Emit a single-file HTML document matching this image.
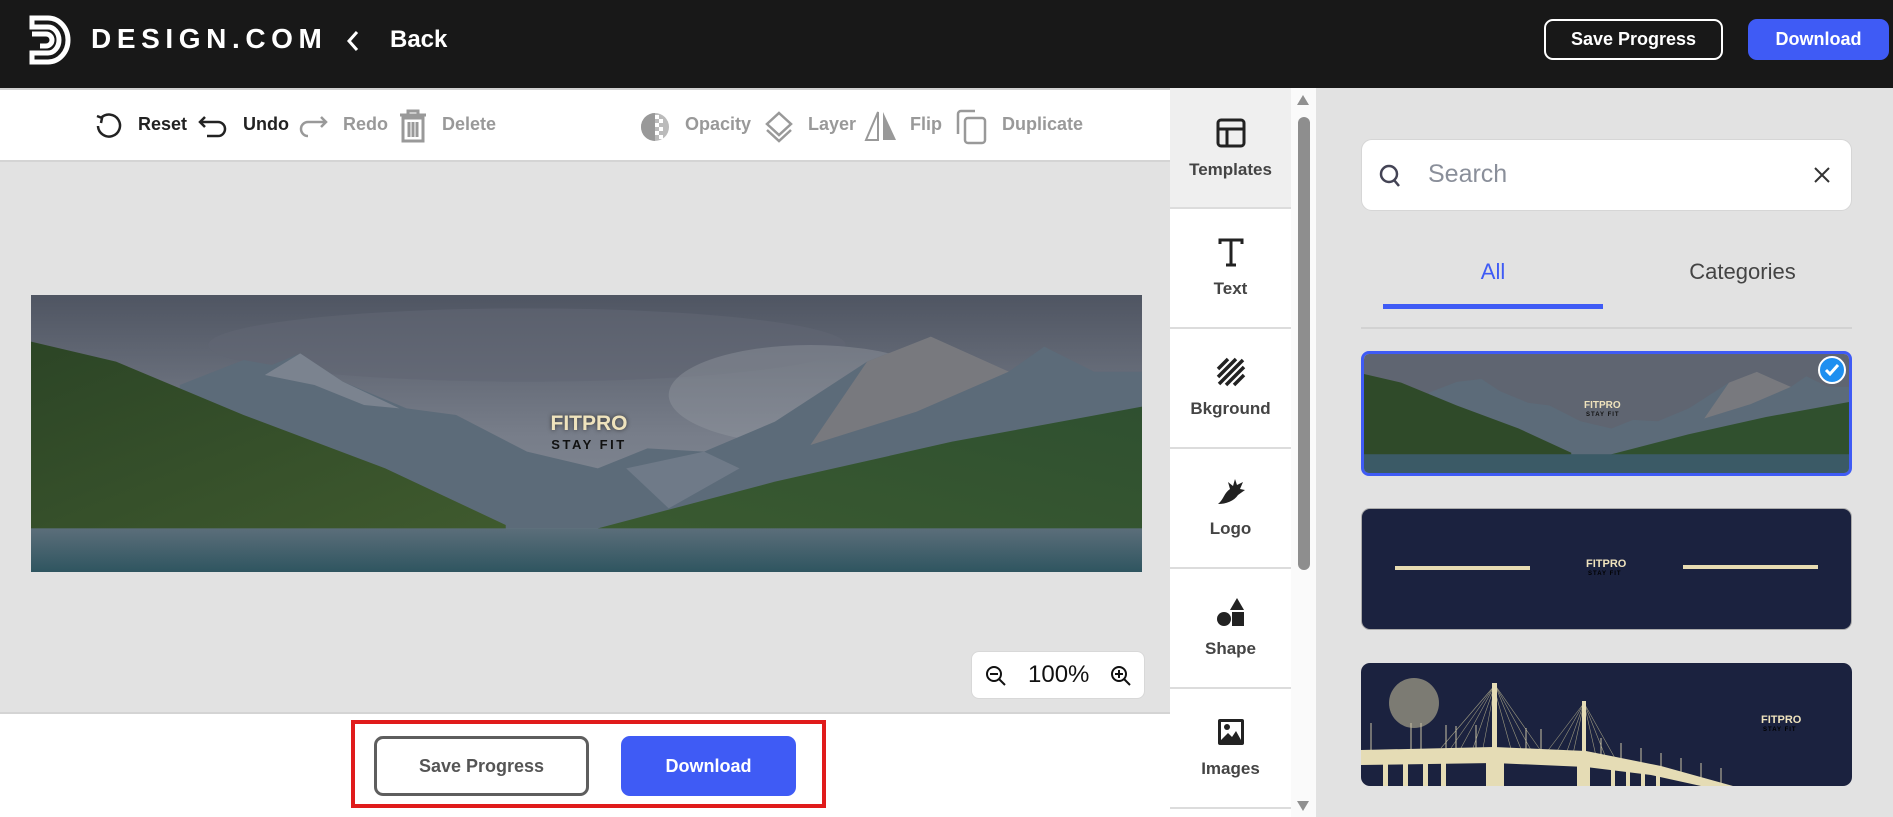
<!DOCTYPE html>
<html><head><meta charset="utf-8"><style>
*{box-sizing:border-box;margin:0;padding:0}
body{width:1893px;height:817px;overflow:hidden;background:#e2e2e2;font-family:"Liberation Sans",Arial,sans-serif;position:relative}
.abs{position:absolute}
.hdr{left:0;top:0;width:1893px;height:88px;background:#181818}
.btn{position:absolute;display:flex;align-items:center;justify-content:center;font-weight:bold;font-size:18px;border-radius:9px}
.tb{left:0;top:88px;width:1170px;height:74px;background:#fff;border-bottom:2px solid #d4d4d4;border-top:2px solid #d0d0d0}
.ti{position:absolute;top:114px;font-size:18px;font-weight:bold}
.side{left:1170px;top:88px;width:121px;height:729px;background:#fff}
.si{position:absolute;left:0;width:121px;height:120px;border-bottom:2px solid #dcdcdc;text-align:center}
.si .lab{position:absolute;left:0;width:121px;top:70px;font-size:17px;font-weight:bold;color:#444}
.si svg{position:absolute;left:46px;top:28px}
</style></head><body>
<div class="abs hdr"></div>
<svg class="abs" style="left:28px;top:15px" width="46" height="50" viewBox="0 0 46 50"><path d="M4 3h16a20 22 0 0 1 0 44H4v-9h16a11 13 0 0 0 0-26H4z" fill="none" stroke="#fff" stroke-width="5"/><path d="M4 19h14a6 6 0 0 1 0 12H12" fill="none" stroke="#fff" stroke-width="5"/></svg>
<div class="abs" style="left:91px;top:23px;color:#fff;font-size:28px;font-weight:bold;letter-spacing:5.6px">DESIGN.COM</div>
<svg class="abs" style="left:345px;top:30px" width="16" height="22"><path d="M12 2L4 11l8 9" fill="none" stroke="#fff" stroke-width="3"/></svg>
<div class="abs" style="left:390px;top:26px;color:#fff;font-size:24px;font-weight:bold">Back</div>
<div class="btn" style="left:1544px;top:19px;width:179px;height:41px;border:2px solid #fff;color:#fff">Save Progress</div>
<div class="btn" style="left:1748px;top:19px;width:141px;height:41px;background:#3f5bf5;color:#fff">Download</div>

<div class="abs tb"></div>
<svg class="abs" style="left:94px;top:112px" width="28" height="28" viewBox="0 0 28 28"><path d="M7 6A11 11 0 1 1 4 14" fill="none" stroke="#222" stroke-width="2.5"/><path d="M3 4l5 2-1 5" fill="none" stroke="#222" stroke-width="2.5"/></svg>
<div class="ti" style="left:138px;color:#222">Reset</div>
<svg class="abs" style="left:197px;top:114px" width="32" height="26" viewBox="0 0 32 26"><path d="M8 3L3 8l5 5M3 8h18a7 7 0 0 1 0 14H10" fill="none" stroke="#222" stroke-width="2.5"/></svg>
<div class="ti" style="left:243px;color:#222">Undo</div>
<svg class="abs" style="left:297px;top:114px" width="32" height="26" viewBox="0 0 32 26"><path d="M24 3l5 5-5 5M29 8H11a7 7 0 0 0 0 14h0" fill="none" stroke="#999" stroke-width="2.5"/></svg>
<div class="ti" style="left:343px;color:#999">Redo</div>
<svg class="abs" style="left:398px;top:109px" width="30" height="34" viewBox="0 0 30 34"><path d="M2 6h26M10 6V2h10v4M5 9h20v23H5zM11 13v15M15 13v15M19 13v15" fill="none" stroke="#999" stroke-width="3"/></svg>
<div class="ti" style="left:442px;color:#999">Delete</div>
<svg class="abs" style="left:640px;top:112px" width="30" height="30" viewBox="0 0 30 30"><circle cx="15" cy="15" r="14" fill="#bbb"/><path d="M1 15A14 14 0 0 1 15 1v28A14 14 0 0 1 1 15z" fill="#999"/><path d="M15 3h4v4h-4zM19 7h4v4h-4zM15 11h4v4h-4zM19 15h4v4h-4zM15 19h4v4h-4zM19 23h4v4h-4z" fill="#fff"/></svg>
<div class="ti" style="left:685px;color:#999">Opacity</div>
<svg class="abs" style="left:764px;top:111px" width="30" height="32" viewBox="0 0 30 32"><path d="M15 2l12 11-12 11L3 13z" fill="none" stroke="#999" stroke-width="2.5"/><path d="M3 19l12 11 12-11" fill="none" stroke="#999" stroke-width="2.5"/></svg>
<div class="ti" style="left:808px;color:#999">Layer</div>
<svg class="abs" style="left:864px;top:110px" width="34" height="32" viewBox="0 0 34 32"><path d="M14 2L2 30h12z" fill="none" stroke="#999" stroke-width="2"/><path d="M19 2l13 28H19z" fill="#999"/></svg>
<div class="ti" style="left:910px;color:#999">Flip</div>
<svg class="abs" style="left:955px;top:109px" width="34" height="36" viewBox="0 0 34 36"><path d="M20 2H6a3 3 0 0 0-3 3v20" fill="none" stroke="#999" stroke-width="2.5"/><rect x="10" y="9" width="20" height="25" rx="3" fill="none" stroke="#999" stroke-width="2.5"/></svg>
<div class="ti" style="left:1002px;color:#999">Duplicate</div>

<svg class="abs" style="left:31px;top:295px" width="1111" height="277" viewBox="0 0 1568 831" preserveAspectRatio="none">
<defs><linearGradient id="sky" x1="0" y1="0" x2="0" y2="1"><stop offset="0" stop-color="#4f5562"/><stop offset=".5" stop-color="#777d89"/><stop offset="1" stop-color="#8a919c"/></linearGradient>
<linearGradient id="wt" x1="0" y1="0" x2="0" y2="1"><stop offset="0" stop-color="#5b6e7a"/><stop offset="1" stop-color="#2f5560"/></linearGradient>
<linearGradient id="gl" x1="0" y1="0" x2="1" y2="1"><stop offset="0" stop-color="#2c4526"/><stop offset="1" stop-color="#3f5a2e"/></linearGradient>
<linearGradient id="gr" x1="1" y1="0" x2="0" y2="1"><stop offset="0" stop-color="#2f5030"/><stop offset="1" stop-color="#3a5a30"/></linearGradient></defs>
<rect width="1568" height="831" fill="url(#sky)"/>
<ellipse cx="700" cy="150" rx="450" ry="110" fill="#606673" opacity=".6"/>
<ellipse cx="1100" cy="300" rx="200" ry="150" fill="#959aa3" opacity=".4"/>
<path d="M210 270L300 195 340 210 380 175 440 260 530 340 600 360 700 470 800 520 870 460 950 470 1050 380 1180 200 1270 125 1380 230 1430 155 1500 230 1568 230V700H210z" fill="#5c6b79"/>
<path d="M380 175L440 260 520 340 470 330 400 270 330 240z" fill="#7b838f"/>
<path d="M1180 200L1270 125 1380 230 1250 350 1100 450z" fill="#857f80" opacity=".7"/>
<path d="M840 520L950 470 1000 520 900 640z" fill="#6f7a88"/>
<path d="M0 140L120 200 300 360 500 520 670 690V710H0z" fill="url(#gl)"/>
<path d="M800 700L1050 560 1300 440 1568 335V720H800z" fill="url(#gr)"/>
<rect y="700" width="1568" height="131" fill="url(#wt)"/>
</svg>
<div class="abs" style="left:544px;top:412px;width:90px;text-align:center;color:#efe3bd;font-size:21px;font-weight:bold;text-shadow:0 0 4px #333">FITPRO</div>
<div class="abs" style="left:544px;top:437px;width:90px;text-align:center;color:#111;font-size:13px;font-weight:bold;letter-spacing:2.5px">STAY FIT</div>

<div class="abs" style="left:971px;top:651px;width:174px;height:48px;background:#fff;border-radius:8px;border:1px solid #d8d8d8"></div>
<svg class="abs" style="left:985px;top:665px" width="22" height="22" viewBox="0 0 22 22"><circle cx="9" cy="9" r="7" fill="none" stroke="#111" stroke-width="2"/><path d="M14 14l6 6M5 9h8" stroke="#111" stroke-width="2"/></svg>
<div class="abs" style="left:1028px;top:661px;font-size:24px;color:#111">100%</div>
<svg class="abs" style="left:1110px;top:665px" width="22" height="22" viewBox="0 0 22 22"><circle cx="9" cy="9" r="7" fill="none" stroke="#111" stroke-width="2"/><path d="M14 14l6 6M5 9h8M9 5v8" stroke="#111" stroke-width="2"/></svg>

<div class="abs" style="left:0;top:712px;width:1170px;height:105px;background:#fff;border-top:2px solid #d4d4d4"></div>
<div class="abs" style="left:351px;top:720px;width:475px;height:88px;border:4px solid #e01b1b"></div>
<div class="btn" style="left:374px;top:736px;width:215px;height:60px;border:3px solid #5e5e5e;color:#555">Save Progress</div>
<div class="btn" style="left:621px;top:736px;width:175px;height:60px;background:#3f5bf5;color:#fff">Download</div>

<div class="abs side">
<div class="si" style="top:0;background:#efefef;height:121px"><svg width="30" height="30" viewBox="0 0 30 30" style="top:30px"><rect x="2" y="2" width="26" height="26" rx="3" fill="none" stroke="#222" stroke-width="3"/><path d="M2 11h26M11 11v17" stroke="#222" stroke-width="3"/></svg><div class="lab" style="top:72px">Templates</div></div>
<div class="si" style="top:121px"><svg width="30" height="30" viewBox="0 0 30 30"><path d="M4 7V3h22v4M15 3v25M10 28h10" fill="none" stroke="#222" stroke-width="3"/></svg><div class="lab">Text</div></div>
<div class="si" style="top:241px"><svg width="30" height="30" viewBox="0 0 30 30"><path d="M2 12L12 2M2 20L20 2M3 27L27 3M10 28L28 10M18 28L28 18" stroke="#222" stroke-width="3.5"/></svg><div class="lab">Bkground</div></div>
<div class="si" style="top:361px"><svg width="30" height="30" viewBox="0 0 30 30"><path d="M2 27C8 22 8 16 14 12L12 5 17 9 19 2 21 8 27 5 24 12 29 13 22 18C18 24 10 27 2 27z" fill="#222"/></svg><div class="lab">Logo</div></div>
<div class="si" style="top:481px"><svg width="30" height="30" viewBox="0 0 30 30"><path d="M21 1l7 12H14z" fill="#222"/><circle cx="8" cy="22" r="7" fill="#222"/><rect x="16" y="15" width="12" height="14" fill="#222"/></svg><div class="lab">Shape</div></div>
<div class="si" style="top:601px"><svg width="30" height="30" viewBox="0 0 30 30"><rect x="2" y="2" width="26" height="26" rx="2" fill="#222"/><rect x="5" y="5" width="20" height="18" fill="#fff"/><circle cx="11" cy="10" r="3" fill="#222"/><path d="M5 23l7-7 4 4 4-6 5 9z" fill="#222"/></svg><div class="lab">Images</div></div>
</div>
<div class="abs" style="left:1291px;top:88px;width:25px;height:729px;background:#fafafa"></div>
<svg class="abs" style="left:1296px;top:94px" width="14" height="12"><path d="M7 1l6 10H1z" fill="#909090"/></svg>
<div class="abs" style="left:1298px;top:117px;width:12px;height:453px;background:#8e8e8e;border-radius:6px"></div>
<svg class="abs" style="left:1296px;top:800px" width="14" height="12"><path d="M1 1h12L7 11z" fill="#909090"/></svg>

<div class="abs" style="left:1361px;top:139px;width:491px;height:72px;background:#fff;border-radius:11px;border:1px solid #d6d6d6"></div>
<svg class="abs" style="left:1378px;top:163px" width="24" height="26" viewBox="0 0 24 26"><circle cx="11" cy="11" r="8" fill="none" stroke="#445" stroke-width="2.5"/><path d="M16 17l5 6" stroke="#445" stroke-width="2.5"/></svg>
<div class="abs" style="left:1428px;top:160px;font-size:25px;color:#8a8f9a">Search</div>
<svg class="abs" style="left:1813px;top:166px" width="18" height="18"><path d="M2 2l14 14M16 2L2 16" stroke="#333" stroke-width="2"/></svg>
<div class="abs" style="left:1383px;top:259px;width:220px;text-align:center;font-size:22px;color:#3f5bf5">All</div>
<div class="abs" style="left:1620px;top:259px;width:245px;text-align:center;font-size:22px;color:#444">Categories</div>
<div class="abs" style="left:1383px;top:304px;width:220px;height:5px;background:#3f5bf5"></div>
<div class="abs" style="left:1361px;top:327px;width:491px;height:2px;background:#d2d2d2"></div>

<div class="abs" style="left:1361px;top:351px;width:491px;height:125px;border:3px solid #3f5bf5;border-radius:8px;overflow:hidden">
<svg width="485" height="119" viewBox="0 0 1568 831" preserveAspectRatio="none" style="display:block">
<rect width="1568" height="831" fill="#5f6571"/>
<path d="M210 270L300 195 380 175 440 260 530 340 600 360 700 470 800 520 870 460 950 470 1050 380 1180 200 1270 125 1380 230 1430 155 1500 230 1568 230V700H210z" fill="#5c6b79"/>
<path d="M1180 200L1270 125 1380 230 1250 350 1100 450z" fill="#857f80" opacity=".7"/>
<path d="M0 140L120 200 300 360 500 520 670 690V710H0z" fill="#2f4a29"/>
<path d="M800 700L1050 560 1300 440 1568 335V720H800z" fill="#30502e"/>
<rect y="700" width="1568" height="131" fill="#3b5a66"/></svg>
<div class="abs" style="left:220px;top:46px;font-size:10px;font-weight:bold;color:#efe3bd">FITPRO</div>
<div class="abs" style="left:222px;top:58px;font-size:6px;font-weight:bold;color:#111;letter-spacing:1px">STAY FIT</div>
</div>
<div class="abs" style="left:1818px;top:356px;width:28px;height:28px;border-radius:50%;background:#1e8ff0;border:2px solid #fff"></div>
<svg class="abs" style="left:1824px;top:363px" width="16" height="14"><path d="M2 7l4 4 8-9" fill="none" stroke="#fff" stroke-width="3"/></svg>

<div class="abs" style="left:1361px;top:508px;width:491px;height:122px;background:#1b223f;border-radius:9px;border:1px solid #aaa"></div>
<div class="abs" style="left:1395px;top:566px;width:135px;height:4px;background:#e8dcb2"></div>
<div class="abs" style="left:1683px;top:565px;width:135px;height:4px;background:#e8dcb2"></div>
<div class="abs" style="left:1586px;top:558px;font-size:11px;font-weight:bold;color:#efe3bd">FITPRO</div>
<div class="abs" style="left:1588px;top:571px;font-size:6px;font-weight:bold;color:#000;letter-spacing:1px">STAY FIT</div>

<div class="abs" style="left:1361px;top:663px;width:491px;height:123px;background:#1b223f;border-radius:9px;overflow:hidden">
<svg width="491" height="123" viewBox="0 0 491 123">
<ellipse cx="53" cy="40" rx="25" ry="25" fill="#7c7b73"/>
<g stroke="#9a977f" stroke-width=".6" fill="none">
<path d="M134 22L80 85M134 22L90 85M134 22L100 85M134 22L112 85M134 22L122 85M134 28L150 86M134 22L160 86M134 22L170 87M134 22L180 88"/>
<path d="M223 40L185 90M223 40L195 90M223 40L205 91M223 40L212 91M223 40L235 93M223 40L245 95M223 40L255 97"/>
</g>
<g stroke="#c8c2a4" stroke-width="1"><path d="M10 60v30M50 60v30M60 60v30M85 62v28M95 63v26M115 62v28M165 65v24M180 66v24M240 75v20M260 80v18M280 85v18M300 90v15M320 95v15M340 100v15M360 105v15"/></g>
<path d="M0 87L133 84 225 88 300 103 372 123H340L290 112 225 104 133 100 0 102z" fill="#e5dcb5"/>
<rect x="131" y="20" width="5" height="103" fill="#e5dcb5"/><rect x="221" y="38" width="4" height="85" fill="#e5dcb5"/>
<rect x="125" y="98" width="18" height="25" fill="#e5dcb5"/><rect x="216" y="100" width="13" height="23" fill="#e5dcb5"/>
<rect x="22" y="100" width="5" height="23" fill="#e5dcb5"/><rect x="42" y="100" width="5" height="23" fill="#e5dcb5"/><rect x="62" y="100" width="5" height="23" fill="#e5dcb5"/><rect x="80" y="100" width="5" height="23" fill="#e5dcb5"/>
<rect x="250" y="104" width="4" height="19" fill="#e5dcb5"/><rect x="265" y="106" width="4" height="17" fill="#e5dcb5"/><rect x="280" y="109" width="4" height="14" fill="#e5dcb5"/><rect x="295" y="112" width="4" height="11" fill="#e5dcb5"/>
</svg>
<div class="abs" style="left:400px;top:51px;font-size:11px;font-weight:bold;color:#efe3bd">FITPRO</div>
<div class="abs" style="left:402px;top:64px;font-size:6px;font-weight:bold;color:#000;letter-spacing:1px">STAY FIT</div>
</div>
</body></html>
